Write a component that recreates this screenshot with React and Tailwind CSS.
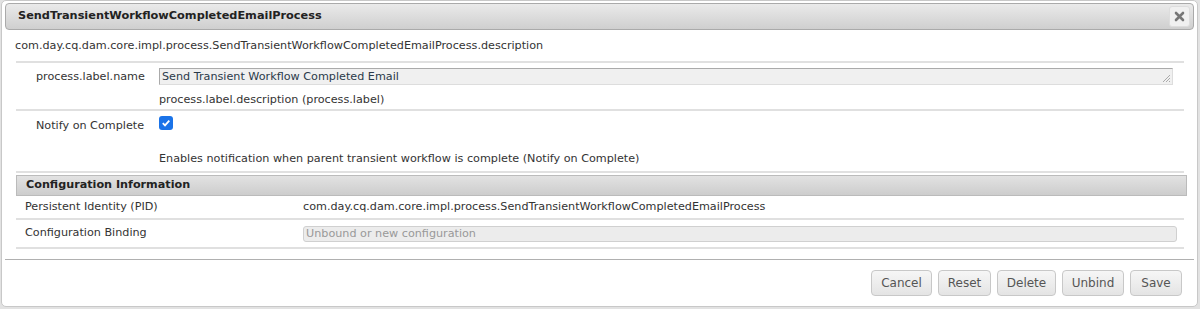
import React from 'react';

const font = { fontFamily: '"DejaVu Sans", Verdana, sans-serif' };

const Btn = ({ children, w }) => (
  <button
    className={`${w} h-[26px] rounded-[4px] border border-[#c8c8c8] bg-gradient-to-b from-[#f6f6f6] to-[#e4e4e4] text-[12px] text-[#555]`}
  >
    {children}
  </button>
);

const App = () => {
  return (
    <div className="w-[1200px] h-[309px] bg-[#e2e2e2] pl-px pr-[2px] pb-[2px]" style={font}>
      <div className="h-[307px] bg-white border border-[#c8c8c8] rounded-[5px] px-[3px] pt-[2px] flex flex-col text-[#333] text-[11.2px]">
        {/* title bar */}
        <div className="h-[27px] shrink-0 flex items-center justify-between border border-[#aaa] rounded-[4px] bg-gradient-to-b from-[#eaeaea] to-[#cfcfcf] pl-[12px] pr-[3px]">
          <span className="font-bold text-[11.3px] text-[#222]">SendTransientWorkflowCompletedEmailProcess</span>
          <span className="w-[21px] h-[21px] rounded-[3px] border border-[#ddd] bg-[#f0f0f0] flex items-center justify-center">
            <svg width="11" height="11" viewBox="0 0 11 11">
              <path d="M2 2 L9 9 M9 2 L2 9" stroke="#777" strokeWidth="2.6" strokeLinecap="round" />
            </svg>
          </span>
        </div>

        <div className="pl-[10px] pt-[8px] h-[31px] shrink-0">
          com.day.cq.dam.core.impl.process.SendTransientWorkflowCompletedEmailProcess.description
        </div>

        {/* properties */}
        <div className="ml-[11px] mr-[10px] border-t-2 border-[#e0e0e0]">
          <div className="flex h-[48px] border-b-2 border-[#e0e0e0]">
            <div className="w-[143px] shrink-0 pl-[20px] pt-[6px]">process.label.name</div>
            <div className="flex-1 pt-[5px] pr-[11px]">
              <div className="h-[17px] border border-[#aaa] border-b-[#ddd] border-r-[#ddd] bg-[#f0f0f0] pl-[2px] leading-[15px] relative text-[#2b3a4a]">
                Send Transient Workflow Completed Email
                <svg className="absolute right-[1px] bottom-[1px]" width="10" height="10" viewBox="0 0 10 10">
                  <path d="M9 2 L2 9 M9 5 L5 9 M9 8 L8 9" stroke="#aaa" strokeWidth="1" />
                </svg>
              </div>
              <div className="pt-[7px]">process.label.description (process.label)</div>
            </div>
          </div>
          <div className="flex h-[62px] border-b-2 border-[#e0e0e0]">
            <div className="w-[143px] shrink-0 pl-[20px] pt-[7px]">Notify on Complete</div>
            <div className="flex-1 pt-[5px]">
              <span className="w-[14px] h-[14px] rounded-[3px] bg-[#1a73e8] flex items-center justify-center">
                <svg width="10" height="10" viewBox="0 0 10 10">
                  <path d="M1.8 5.2 L4 7.4 L8.3 2.6" stroke="white" strokeWidth="1.8" fill="none" />
                </svg>
              </span>
              <div className="pt-[21px]">Enables notification when parent transient workflow is complete (Notify on Complete)</div>
            </div>
          </div>
        </div>

        {/* configuration information */}
        <div className="ml-[11px] mr-[7px] mt-[2px]">
          <div className="h-[21px] border border-[#bbb] bg-gradient-to-b from-[#e2e2e2] to-[#cdcdcd] pl-[9px] flex items-center font-bold text-[#222]">
            Configuration Information
          </div>
          <div className="mr-[3px]">
            <div className="flex items-center h-[24px] border-b-2 border-[#e0e0e0]">
              <div className="w-[287px] shrink-0 pl-[9px]">Persistent Identity (PID)</div>
              <div>com.day.cq.dam.core.impl.process.SendTransientWorkflowCompletedEmailProcess</div>
            </div>
            <div className="flex items-center h-[29px] border-b-2 border-[#e0e0e0]">
              <div className="w-[287px] shrink-0 pl-[9px]">Configuration Binding</div>
              <div className="flex-1 pr-[7px]">
                <div className="h-[16px] rounded-[3px] border border-[#d0d0d0] bg-[#ececec] pl-[2px] leading-[14px] text-[#999]">
                  Unbound or new configuration
                </div>
              </div>
            </div>
          </div>
        </div>

        <div className="mt-[10px] border-t border-[#b0b0b0]" />

        <div className="flex justify-end gap-[6px] pt-[10px] pr-[12px]">
          <Btn w="w-[61px]">Cancel</Btn>
          <Btn w="w-[53px]">Reset</Btn>
          <Btn w="w-[59px]">Delete</Btn>
          <Btn w="w-[62px]">Unbind</Btn>
          <Btn w="w-[52px]">Save</Btn>
        </div>
      </div>
    </div>
  );
};

export default App;
